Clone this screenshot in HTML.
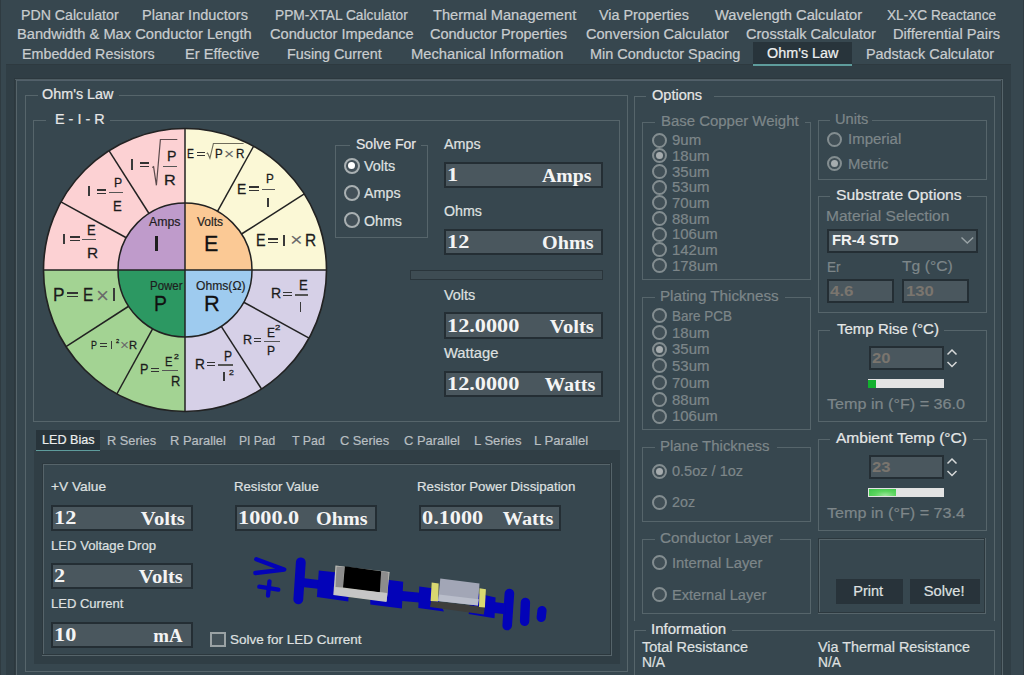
<!DOCTYPE html><html><head><meta charset="utf-8"><style>html,body{margin:0;padding:0;width:1024px;height:675px;overflow:hidden;background:#37474f;}.a{position:absolute;}.t{position:absolute;white-space:nowrap;line-height:normal;}</style></head><body><div class="a" style="left:0px;top:0px;width:1024px;height:675px;background:#37474f;"></div>
<div class="a" style="left:0px;top:0px;width:1px;height:675px;background:#2f3b41;"></div>
<div class="a" style="left:1023px;top:0px;width:1px;height:675px;background:#2f3b41;"></div>
<div class="a" style="left:753px;top:42px;width:99px;height:22px;background:#28343b;"></div>
<div class="t" style="left:20.80px;top:7.63px;font-size:13.77px;color:#c9cdcf;font-family:'Liberation Sans', sans-serif;font-weight:400;transform:scaleX(1.0295);transform-origin:left 0;-webkit-text-stroke:0.2px #c9cdcf;">PDN Calculator</div>
<div class="t" style="left:142.00px;top:7.63px;font-size:13.77px;color:#c9cdcf;font-family:'Liberation Sans', sans-serif;font-weight:400;transform:scaleX(1.0566);transform-origin:left 0;-webkit-text-stroke:0.2px #c9cdcf;">Planar Inductors</div>
<div class="t" style="left:274.90px;top:7.63px;font-size:13.77px;color:#c9cdcf;font-family:'Liberation Sans', sans-serif;font-weight:400;transform:scaleX(0.9973);transform-origin:left 0;-webkit-text-stroke:0.2px #c9cdcf;">PPM-XTAL Calculator</div>
<div class="t" style="left:432.70px;top:7.63px;font-size:13.77px;color:#c9cdcf;font-family:'Liberation Sans', sans-serif;font-weight:400;transform:scaleX(1.0635);transform-origin:left 0;-webkit-text-stroke:0.2px #c9cdcf;">Thermal Management</div>
<div class="t" style="left:598.50px;top:7.63px;font-size:13.77px;color:#c9cdcf;font-family:'Liberation Sans', sans-serif;font-weight:400;transform:scaleX(1.0434);transform-origin:left 0;-webkit-text-stroke:0.2px #c9cdcf;">Via Properties</div>
<div class="t" style="left:715.20px;top:7.63px;font-size:13.77px;color:#c9cdcf;font-family:'Liberation Sans', sans-serif;font-weight:400;transform:scaleX(1.0666);transform-origin:left 0;-webkit-text-stroke:0.2px #c9cdcf;">Wavelength Calculator</div>
<div class="t" style="left:887.00px;top:7.63px;font-size:13.77px;color:#c9cdcf;font-family:'Liberation Sans', sans-serif;font-weight:400;transform:scaleX(0.9899);transform-origin:left 0;-webkit-text-stroke:0.2px #c9cdcf;">XL-XC Reactance</div>
<div class="t" style="left:17.30px;top:27.43px;font-size:13.77px;color:#c9cdcf;font-family:'Liberation Sans', sans-serif;font-weight:400;transform:scaleX(1.0651);transform-origin:left 0;-webkit-text-stroke:0.2px #c9cdcf;">Bandwidth &amp; Max Conductor Length</div>
<div class="t" style="left:269.80px;top:27.43px;font-size:13.77px;color:#c9cdcf;font-family:'Liberation Sans', sans-serif;font-weight:400;transform:scaleX(1.0609);transform-origin:left 0;-webkit-text-stroke:0.2px #c9cdcf;">Conductor Impedance</div>
<div class="t" style="left:430.20px;top:27.43px;font-size:13.77px;color:#c9cdcf;font-family:'Liberation Sans', sans-serif;font-weight:400;transform:scaleX(1.0536);transform-origin:left 0;-webkit-text-stroke:0.2px #c9cdcf;">Conductor Properties</div>
<div class="t" style="left:586.30px;top:27.43px;font-size:13.77px;color:#c9cdcf;font-family:'Liberation Sans', sans-serif;font-weight:400;transform:scaleX(1.0555);transform-origin:left 0;-webkit-text-stroke:0.2px #c9cdcf;">Conversion Calculator</div>
<div class="t" style="left:746.10px;top:27.43px;font-size:13.77px;color:#c9cdcf;font-family:'Liberation Sans', sans-serif;font-weight:400;transform:scaleX(1.0547);transform-origin:left 0;-webkit-text-stroke:0.2px #c9cdcf;">Crosstalk Calculator</div>
<div class="t" style="left:893.00px;top:27.43px;font-size:13.77px;color:#c9cdcf;font-family:'Liberation Sans', sans-serif;font-weight:400;transform:scaleX(1.0639);transform-origin:left 0;-webkit-text-stroke:0.2px #c9cdcf;">Differential Pairs</div>
<div class="t" style="left:22.30px;top:47.23px;font-size:13.77px;color:#c9cdcf;font-family:'Liberation Sans', sans-serif;font-weight:400;transform:scaleX(1.0385);transform-origin:left 0;-webkit-text-stroke:0.2px #c9cdcf;">Embedded Resistors</div>
<div class="t" style="left:185.30px;top:47.23px;font-size:13.77px;color:#c9cdcf;font-family:'Liberation Sans', sans-serif;font-weight:400;transform:scaleX(1.0603);transform-origin:left 0;-webkit-text-stroke:0.2px #c9cdcf;">Er Effective</div>
<div class="t" style="left:286.80px;top:47.23px;font-size:13.77px;color:#c9cdcf;font-family:'Liberation Sans', sans-serif;font-weight:400;transform:scaleX(1.0410);transform-origin:left 0;-webkit-text-stroke:0.2px #c9cdcf;">Fusing Current</div>
<div class="t" style="left:411.20px;top:47.23px;font-size:13.77px;color:#c9cdcf;font-family:'Liberation Sans', sans-serif;font-weight:400;transform:scaleX(1.0711);transform-origin:left 0;-webkit-text-stroke:0.2px #c9cdcf;">Mechanical Information</div>
<div class="t" style="left:590.10px;top:47.23px;font-size:13.77px;color:#c9cdcf;font-family:'Liberation Sans', sans-serif;font-weight:400;transform:scaleX(1.0501);transform-origin:left 0;-webkit-text-stroke:0.2px #c9cdcf;">Min Conductor Spacing</div>
<div class="t" style="left:767.20px;top:45.63px;font-size:13.77px;color:#eef0f0;font-family:'Liberation Sans', sans-serif;font-weight:400;transform:scaleX(1.0437);transform-origin:left 0;-webkit-text-stroke:0.2px #eef0f0;">Ohm's Law</div>
<div class="t" style="left:866.20px;top:47.23px;font-size:13.77px;color:#c9cdcf;font-family:'Liberation Sans', sans-serif;font-weight:400;transform:scaleX(1.0460);transform-origin:left 0;-webkit-text-stroke:0.2px #c9cdcf;">Padstack Calculator</div>
<div class="a" style="left:6px;top:64px;width:1005px;height:611px;background:#303e45;"></div>
<div class="a" style="left:6px;top:64px;width:1005px;height:1px;background:#2e3a40;"></div>
<div class="a" style="left:753px;top:64px;width:99px;height:2px;background:#5e9c9c;"></div>
<div class="a" style="left:14px;top:78px;width:989px;height:597px;background:#37474f;"></div>
<div class="a" style="left:14px;top:78px;width:989px;height:1px;background:#2c383e;"></div>
<div class="a" style="left:14px;top:78px;width:1px;height:597px;background:#2c383e;"></div>
<div class="a" style="left:15px;top:79px;width:1px;height:596px;background:#303c42;"></div>
<div class="a" style="left:15px;top:79px;width:988px;height:1px;background:#4e5c62;"></div>
<div class="a" style="left:16px;top:80px;width:987px;height:1px;background:#52606a;"></div>
<div class="a" style="left:16px;top:80px;width:1px;height:595px;background:#56646a;"></div>
<div class="a" style="left:1001px;top:80px;width:1px;height:595px;background:#303c42;"></div>
<div class="a" style="left:1002px;top:79px;width:1px;height:596px;background:#56646a;"></div>
<div class="a" style="left:25px;top:95px;width:603px;height:1px;background:#56656b;"></div>
<div class="a" style="left:25px;top:95px;width:1px;height:577px;background:#56656b;"></div>
<div class="a" style="left:627px;top:95px;width:1px;height:577px;background:#56656b;"></div>
<div class="a" style="left:25px;top:671px;width:603px;height:1px;background:#56656b;"></div>
<div class="a" style="left:38px;top:94px;width:81px;height:3px;background:#37474f;"></div>
<div class="t" style="left:42.00px;top:86.53px;font-size:13.77px;color:#e6e6e6;font-family:'Liberation Sans', sans-serif;font-weight:400;transform:scaleX(1.0437);transform-origin:left 0;-webkit-text-stroke:0.2px #e6e6e6;">Ohm's Law</div>
<div class="a" style="left:33px;top:120px;width:587px;height:1px;background:#56656b;"></div>
<div class="a" style="left:33px;top:120px;width:1px;height:302px;background:#56656b;"></div>
<div class="a" style="left:619px;top:120px;width:1px;height:302px;background:#56656b;"></div>
<div class="a" style="left:33px;top:421px;width:587px;height:1px;background:#56656b;"></div>
<div class="a" style="left:46px;top:119px;width:64px;height:3px;background:#37474f;"></div>
<div class="t" style="left:54.60px;top:111.53px;font-size:13.77px;color:#e6e6e6;font-family:'Liberation Sans', sans-serif;font-weight:400;transform:scaleX(1.0454);transform-origin:left 0;-webkit-text-stroke:0.2px #e6e6e6;">E - I - R</div>
<svg class="a" style="left:0;top:0" width="1024" height="675"><path d="M185,270 L326.50,270.00 A141.5,141.5 0 0 0 185.00,128.50 Z" fill="#fbf8d6"/><path d="M185,270 L185.00,128.50 A141.5,141.5 0 0 0 43.50,270.00 Z" fill="#fcd1d3"/><path d="M185,270 L43.50,270.00 A141.5,141.5 0 0 0 185.00,411.50 Z" fill="#a3d393"/><path d="M185,270 L185.00,411.50 A141.5,141.5 0 0 0 326.50,270.00 Z" fill="#d6d0e7"/><line x1="241.51" y1="234.00" x2="304.34" y2="193.97" stroke="#222" stroke-width="1.5"/><line x1="217.48" y1="211.40" x2="253.60" y2="146.24" stroke="#222" stroke-width="1.5"/><line x1="149.00" y1="213.49" x2="108.97" y2="150.66" stroke="#222" stroke-width="1.5"/><line x1="126.26" y1="237.77" x2="60.94" y2="201.94" stroke="#222" stroke-width="1.5"/><line x1="128.65" y1="306.25" x2="65.99" y2="346.55" stroke="#222" stroke-width="1.5"/><line x1="152.72" y1="328.71" x2="116.83" y2="394.00" stroke="#222" stroke-width="1.5"/><line x1="221.25" y1="326.35" x2="261.55" y2="389.01" stroke="#222" stroke-width="1.5"/><line x1="243.74" y1="302.23" x2="309.06" y2="338.06" stroke="#222" stroke-width="1.5"/><path d="M185,270 L252.00,270.00 A67,67 0 0 0 185.00,203.00 Z" fill="#fbc995"/><path d="M185,270 L185.00,203.00 A67,67 0 0 0 118.00,270.00 Z" fill="#bf9bcb"/><path d="M185,270 L118.00,270.00 A67,67 0 0 0 185.00,337.00 Z" fill="#2c9862"/><path d="M185,270 L185.00,337.00 A67,67 0 0 0 252.00,270.00 Z" fill="#9ecbef"/><circle cx="185" cy="270" r="67" fill="none" stroke="#222" stroke-width="1.5"/><circle cx="185" cy="270" r="141.5" fill="none" stroke="#222" stroke-width="1.6"/><line x1="43.5" y1="270" x2="326.5" y2="270" stroke="#222" stroke-width="1.5"/><line x1="185" y1="128.5" x2="185" y2="411.5" stroke="#222" stroke-width="1.5"/><polyline points="152.2,167.6 153.6,166.8 156.4,185.3 160.4,139.5 177.3,139.5" fill="none" stroke="#5a4a4c" stroke-width="1.2"/><polyline points="206.6,153.6 207.6,153 209.9,158.3 213.4,143.5 243.6,143.5" fill="none" stroke="#6f6c5c" stroke-width="1.1"/></svg>
<div class="a" style="left:131.05px;top:159.25px;width:1.5px;height:11.199999999999989px;background:#3a3a3a;"></div>
<div class="a" style="left:139.5px;top:162px;width:9.900000000000006px;height:1.5999999999999943px;background:#333333;"></div>
<div class="a" style="left:139.5px;top:165.79999999999998px;width:9.900000000000006px;height:1.5999999999999943px;background:#333333;"></div>
<div class="t" style="left:167.14px;top:146.80px;font-size:15.22px;color:#1c1c1c;font-family:'Liberation Sans', sans-serif;font-weight:400;transform:scaleX(0.9286);transform-origin:left 0;-webkit-text-stroke:0.28px #1c1c1c;">P</div>
<div class="a" style="left:163.1px;top:165.5px;width:13.700000000000017px;height:1.4000000000000057px;background:#555;"></div>
<div class="t" style="left:164.27px;top:172.13px;font-size:14.20px;color:#1c1c1c;font-family:'Liberation Sans', sans-serif;font-weight:400;transform:scaleX(1.1431);transform-origin:left 0;-webkit-text-stroke:0.28px #1c1c1c;">R</div>
<div class="a" style="left:88.05px;top:185.75px;width:1.5px;height:10.5px;background:#3a3a3a;"></div>
<div class="a" style="left:96.7px;top:189px;width:9.200000000000003px;height:1.5999999999999943px;background:#333333;"></div>
<div class="a" style="left:96.7px;top:192.79999999999998px;width:9.200000000000003px;height:1.5999999999999943px;background:#333333;"></div>
<div class="a" style="left:109px;top:191.7px;width:13.700000000000003px;height:1.4000000000000057px;background:#555;"></div>
<div class="t" style="left:113.59px;top:174.85px;font-size:13.19px;color:#1c1c1c;font-family:'Liberation Sans', sans-serif;font-weight:400;transform:scaleX(0.9297);transform-origin:left 0;-webkit-text-stroke:0.28px #1c1c1c;">P</div>
<div class="t" style="left:112.92px;top:197.13px;font-size:15.07px;color:#1c1c1c;font-family:'Liberation Sans', sans-serif;font-weight:400;transform:scaleX(0.8716);transform-origin:left 0;-webkit-text-stroke:0.28px #1c1c1c;">E</div>
<div class="a" style="left:63.05px;top:233.75px;width:1.5px;height:10.5px;background:#3a3a3a;"></div>
<div class="a" style="left:70.4px;top:236px;width:9.199999999999989px;height:1.5999999999999943px;background:#333333;"></div>
<div class="a" style="left:70.4px;top:239.79999999999998px;width:9.199999999999989px;height:1.5999999999999943px;background:#333333;"></div>
<div class="a" style="left:82.3px;top:239.0px;width:13.400000000000006px;height:1.4000000000000057px;background:#555;"></div>
<div class="t" style="left:86.63px;top:221.13px;font-size:15.07px;color:#1c1c1c;font-family:'Liberation Sans', sans-serif;font-weight:400;transform:scaleX(0.8595);transform-origin:left 0;-webkit-text-stroke:0.28px #1c1c1c;">E</div>
<div class="t" style="left:86.74px;top:243.83px;font-size:15.07px;color:#1c1c1c;font-family:'Liberation Sans', sans-serif;font-weight:400;transform:scaleX(1.0214);transform-origin:left 0;-webkit-text-stroke:0.28px #1c1c1c;">R</div>
<div class="t" style="left:187.44px;top:146.71px;font-size:12.46px;color:#1c1c1c;font-family:'Liberation Sans', sans-serif;font-weight:400;transform:scaleX(0.8332);transform-origin:left 0;-webkit-text-stroke:0.28px #1c1c1c;">E</div>
<div class="a" style="left:197.0px;top:152px;width:7.5px;height:1.3000000000000114px;background:#333333;"></div>
<div class="a" style="left:197.0px;top:154.9px;width:7.5px;height:1.299999999999983px;background:#333333;"></div>
<div class="t" style="left:215.35px;top:146.71px;font-size:12.46px;color:#1c1c1c;font-family:'Liberation Sans', sans-serif;font-weight:400;transform:scaleX(0.9238);transform-origin:left 0;-webkit-text-stroke:0.28px #1c1c1c;">P</div>
<div class="t" style="left:224.35px;top:145.45px;font-size:15.51px;color:#6a6a6a;font-family:'Liberation Sans', sans-serif;font-weight:400;transform:scaleX(1.1246);transform-origin:left 0;-webkit-text-stroke:0px #6a6a6a;">×</div>
<div class="t" style="left:235.83px;top:146.71px;font-size:12.46px;color:#1c1c1c;font-family:'Liberation Sans', sans-serif;font-weight:400;transform:scaleX(0.9385);transform-origin:left 0;-webkit-text-stroke:0.28px #1c1c1c;">R</div>
<div class="t" style="left:237.46px;top:180.17px;font-size:14.93px;color:#1c1c1c;font-family:'Liberation Sans', sans-serif;font-weight:400;transform:scaleX(0.9293);transform-origin:left 0;-webkit-text-stroke:0.28px #1c1c1c;">E</div>
<div class="a" style="left:249.4px;top:186px;width:9.200000000000017px;height:1.5999999999999943px;background:#333333;"></div>
<div class="a" style="left:249.4px;top:189.79999999999998px;width:9.200000000000017px;height:1.5999999999999943px;background:#333333;"></div>
<div class="a" style="left:261.8px;top:189.0px;width:13.0px;height:1.4000000000000057px;background:#555;"></div>
<div class="t" style="left:266.13px;top:172.41px;font-size:12.46px;color:#1c1c1c;font-family:'Liberation Sans', sans-serif;font-weight:400;transform:scaleX(0.9388);transform-origin:left 0;-webkit-text-stroke:0.28px #1c1c1c;">P</div>
<div class="a" style="left:267.15px;top:198.25px;width:1.5px;height:8.800000000000011px;background:#3a3a3a;"></div>
<div class="t" style="left:255.52px;top:230.98px;font-size:16.23px;color:#1c1c1c;font-family:'Liberation Sans', sans-serif;font-weight:400;transform:scaleX(0.8885);transform-origin:left 0;-webkit-text-stroke:0.28px #1c1c1c;">E</div>
<div class="a" style="left:268.4px;top:238px;width:9.700000000000045px;height:1.5999999999999943px;background:#333333;"></div>
<div class="a" style="left:268.4px;top:241.79999999999998px;width:9.700000000000045px;height:1.5999999999999943px;background:#333333;"></div>
<div class="a" style="left:283.4px;top:234.55px;width:1.5px;height:11.199999999999989px;background:#3a3a3a;"></div>
<div class="t" style="left:290.15px;top:230.49px;font-size:18.20px;color:#6a6a6a;font-family:'Liberation Sans', sans-serif;font-weight:400;transform:scaleX(1.1926);transform-origin:left 0;-webkit-text-stroke:0px #6a6a6a;">×</div>
<div class="t" style="left:305.28px;top:230.98px;font-size:16.23px;color:#1c1c1c;font-family:'Liberation Sans', sans-serif;font-weight:400;transform:scaleX(0.9536);transform-origin:left 0;-webkit-text-stroke:0.28px #1c1c1c;">R</div>
<div class="t" style="left:53.09px;top:284.56px;font-size:17.68px;color:#1c1c1c;font-family:'Liberation Sans', sans-serif;font-weight:400;transform:scaleX(0.9789);transform-origin:left 0;-webkit-text-stroke:0.28px #1c1c1c;">P</div>
<div class="a" style="left:67.3px;top:292px;width:11.100000000000009px;height:1.6000000000000227px;background:#333333;"></div>
<div class="a" style="left:67.3px;top:295.8px;width:11.100000000000009px;height:1.599999999999966px;background:#333333;"></div>
<div class="t" style="left:82.54px;top:284.56px;font-size:17.68px;color:#1c1c1c;font-family:'Liberation Sans', sans-serif;font-weight:400;transform:scaleX(0.8676);transform-origin:left 0;-webkit-text-stroke:0.28px #1c1c1c;">E</div>
<div class="t" style="left:95.80px;top:282.79px;font-size:21.57px;color:#6a6a6a;font-family:'Liberation Sans', sans-serif;font-weight:400;transform:scaleX(1.0375);transform-origin:left 0;-webkit-text-stroke:0px #6a6a6a;">×</div>
<div class="a" style="left:113.4px;top:288.45px;width:1.5px;height:12.199999999999989px;background:#3a3a3a;"></div>
<div class="t" style="left:91.36px;top:339.09px;font-size:10.72px;color:#1c1c1c;font-family:'Liberation Sans', sans-serif;font-weight:400;transform:scaleX(0.8296);transform-origin:left 0;-webkit-text-stroke:0.28px #1c1c1c;">P</div>
<div class="a" style="left:99.9px;top:343px;width:6.8999999999999915px;height:1.3000000000000114px;background:#333333;"></div>
<div class="a" style="left:99.9px;top:345.90000000000003px;width:6.8999999999999915px;height:1.3000000000000114px;background:#333333;"></div>
<div class="a" style="left:110.9px;top:341.45px;width:1.5px;height:7.400000000000034px;background:#3a3a3a;"></div>
<div class="t" style="left:115.93px;top:338.14px;font-size:6.00px;color:#1c1c1c;font-family:'Liberation Sans', sans-serif;font-weight:400;transform:scaleX(0.9744);transform-origin:left 0;-webkit-text-stroke:0.28px #1c1c1c;">2</div>
<div class="t" style="left:119.79px;top:336.84px;font-size:14.38px;color:#6a6a6a;font-family:'Liberation Sans', sans-serif;font-weight:400;transform:scaleX(1.0719);transform-origin:left 0;-webkit-text-stroke:0px #6a6a6a;">×</div>
<div class="t" style="left:129.37px;top:339.09px;font-size:10.72px;color:#1c1c1c;font-family:'Liberation Sans', sans-serif;font-weight:400;transform:scaleX(1.0437);transform-origin:left 0;-webkit-text-stroke:0.28px #1c1c1c;">R</div>
<div class="t" style="left:139.56px;top:361.19px;font-size:13.91px;color:#1c1c1c;font-family:'Liberation Sans', sans-serif;font-weight:400;transform:scaleX(0.9082);transform-origin:left 0;-webkit-text-stroke:0.28px #1c1c1c;">P</div>
<div class="a" style="left:150.9px;top:368px;width:8.0px;height:1.3000000000000114px;background:#333333;"></div>
<div class="a" style="left:150.9px;top:370.90000000000003px;width:8.0px;height:1.3000000000000114px;background:#333333;"></div>
<div class="a" style="left:161.7px;top:369.5px;width:16.400000000000006px;height:1.3999999999999773px;background:#555;"></div>
<div class="t" style="left:165.18px;top:353.58px;font-size:13.48px;color:#1c1c1c;font-family:'Liberation Sans', sans-serif;font-weight:400;transform:scaleX(0.8250);transform-origin:left 0;-webkit-text-stroke:0.28px #1c1c1c;">E</div>
<div class="t" style="left:174.18px;top:352.62px;font-size:6.57px;color:#1c1c1c;font-family:'Liberation Sans', sans-serif;font-weight:400;transform:scaleX(1.3244);transform-origin:left 0;-webkit-text-stroke:0.28px #1c1c1c;">2</div>
<div class="t" style="left:170.84px;top:373.36px;font-size:14.06px;color:#1c1c1c;font-family:'Liberation Sans', sans-serif;font-weight:400;transform:scaleX(0.9158);transform-origin:left 0;-webkit-text-stroke:0.28px #1c1c1c;">R</div>
<div class="t" style="left:194.87px;top:355.89px;font-size:13.91px;color:#1c1c1c;font-family:'Liberation Sans', sans-serif;font-weight:400;transform:scaleX(0.9857);transform-origin:left 0;-webkit-text-stroke:0.28px #1c1c1c;">R</div>
<div class="a" style="left:206.6px;top:362px;width:8.599999999999994px;height:1.3000000000000114px;background:#333333;"></div>
<div class="a" style="left:206.6px;top:364.90000000000003px;width:8.599999999999994px;height:1.3000000000000114px;background:#333333;"></div>
<div class="a" style="left:218.2px;top:364.3px;width:14.700000000000017px;height:1.3999999999999773px;background:#555;"></div>
<div class="t" style="left:223.70px;top:347.69px;font-size:13.91px;color:#1c1c1c;font-family:'Liberation Sans', sans-serif;font-weight:400;transform:scaleX(0.8679);transform-origin:left 0;-webkit-text-stroke:0.28px #1c1c1c;">P</div>
<div class="a" style="left:223.05px;top:371.85px;width:1.5px;height:9.599999999999966px;background:#3a3a3a;"></div>
<div class="t" style="left:228.68px;top:367.55px;font-size:7.86px;color:#1c1c1c;font-family:'Liberation Sans', sans-serif;font-weight:400;transform:scaleX(1.1077);transform-origin:left 0;-webkit-text-stroke:0.28px #1c1c1c;">2</div>
<div class="t" style="left:271.25px;top:286.12px;font-size:13.77px;color:#1c1c1c;font-family:'Liberation Sans', sans-serif;font-weight:400;transform:scaleX(1.0205);transform-origin:left 0;-webkit-text-stroke:0.28px #1c1c1c;">R</div>
<div class="a" style="left:283.1px;top:292px;width:8.799999999999955px;height:1.3000000000000114px;background:#333333;"></div>
<div class="a" style="left:283.1px;top:294.90000000000003px;width:8.799999999999955px;height:1.3000000000000114px;background:#333333;"></div>
<div class="a" style="left:294.7px;top:294.2px;width:13.0px;height:1.400000000000034px;background:#555;"></div>
<div class="t" style="left:298.52px;top:275.83px;font-size:15.07px;color:#1c1c1c;font-family:'Liberation Sans', sans-serif;font-weight:400;transform:scaleX(0.8716);transform-origin:left 0;-webkit-text-stroke:0.28px #1c1c1c;">E</div>
<div class="a" style="left:299.65px;top:301.75px;width:1.5px;height:10.5px;background:#3a3a3a;"></div>
<div class="t" style="left:243.37px;top:333.04px;font-size:12.32px;color:#1c1c1c;font-family:'Liberation Sans', sans-serif;font-weight:400;transform:scaleX(1.0178);transform-origin:left 0;-webkit-text-stroke:0.28px #1c1c1c;">R</div>
<div class="a" style="left:254.1px;top:338px;width:7.200000000000017px;height:1.3000000000000114px;background:#333333;"></div>
<div class="a" style="left:254.1px;top:340.90000000000003px;width:7.200000000000017px;height:1.3000000000000114px;background:#333333;"></div>
<div class="a" style="left:264.1px;top:340.6px;width:15.599999999999966px;height:1.3999999999999773px;background:#555;"></div>
<div class="t" style="left:267.02px;top:324.85px;font-size:13.19px;color:#1c1c1c;font-family:'Liberation Sans', sans-serif;font-weight:400;transform:scaleX(0.8988);transform-origin:left 0;-webkit-text-stroke:0.28px #1c1c1c;">E</div>
<div class="t" style="left:275.34px;top:324.00px;font-size:7.14px;color:#1c1c1c;font-family:'Liberation Sans', sans-serif;font-weight:400;transform:scaleX(1.3415);transform-origin:left 0;-webkit-text-stroke:0.28px #1c1c1c;">2</div>
<div class="t" style="left:267.00px;top:344.47px;font-size:12.17px;color:#1c1c1c;font-family:'Liberation Sans', sans-serif;font-weight:400;transform:scaleX(0.9919);transform-origin:left 0;-webkit-text-stroke:0.28px #1c1c1c;">P</div>
<div class="t" style="left:149.10px;top:214.87px;font-size:12.08px;color:#1e1e1e;font-family:'Liberation Sans', sans-serif;font-weight:400;transform:scaleX(1.0201);transform-origin:left 0;-webkit-text-stroke:0.2px #1e1e1e;">Amps</div>
<div class="a" style="left:155.4px;top:236.25px;width:2.1999999999999886px;height:15.099999999999994px;background:#1e1e1e;"></div>
<div class="t" style="left:196.70px;top:214.87px;font-size:12.08px;color:#1e1e1e;font-family:'Liberation Sans', sans-serif;font-weight:400;transform:scaleX(0.9928);transform-origin:left 0;-webkit-text-stroke:0.2px #1e1e1e;">Volts</div>
<div class="t" style="left:204.46px;top:231.44px;font-size:21.88px;color:#111;font-family:'Liberation Sans', sans-serif;font-weight:400;transform:scaleX(0.9776);transform-origin:left 0;-webkit-text-stroke:0.28px #111;">E</div>
<div class="t" style="left:149.70px;top:278.87px;font-size:12.08px;color:#1e1e1e;font-family:'Liberation Sans', sans-serif;font-weight:400;transform:scaleX(0.9492);transform-origin:left 0;-webkit-text-stroke:0.2px #1e1e1e;">Power</div>
<div class="t" style="left:153.62px;top:291.14px;font-size:22.32px;color:#111;font-family:'Liberation Sans', sans-serif;font-weight:400;transform:scaleX(0.8676);transform-origin:left 0;-webkit-text-stroke:0.28px #111;">P</div>
<div class="t" style="left:196.30px;top:278.87px;font-size:12.08px;color:#1e1e1e;font-family:'Liberation Sans', sans-serif;font-weight:400;transform:scaleX(1.0042);transform-origin:left 0;-webkit-text-stroke:0.2px #1e1e1e;">Ohms(Ω)</div>
<div class="t" style="left:204.43px;top:291.14px;font-size:22.32px;color:#111;font-family:'Liberation Sans', sans-serif;font-weight:400;transform:scaleX(0.9759);transform-origin:left 0;-webkit-text-stroke:0.28px #111;">R</div>
<div class="a" style="left:335px;top:145px;width:93px;height:1px;background:#56656b;"></div>
<div class="a" style="left:335px;top:145px;width:1px;height:93px;background:#56656b;"></div>
<div class="a" style="left:427px;top:145px;width:1px;height:93px;background:#56656b;"></div>
<div class="a" style="left:335px;top:237px;width:93px;height:1px;background:#56656b;"></div>
<div class="a" style="left:350px;top:144px;width:71px;height:3px;background:#37474f;"></div>
<div class="t" style="left:355.70px;top:136.53px;font-size:13.77px;color:#e6e6e6;font-family:'Liberation Sans', sans-serif;font-weight:400;transform:scaleX(1.0171);transform-origin:left 0;-webkit-text-stroke:0.2px #e6e6e6;">Solve For</div>
<div class="a" style="left:343.5px;top:157.5px;width:16px;height:16px;box-sizing:border-box;border:2px solid #a9b0b2;border-radius:50%;background:#435058;"></div>
<div class="a" style="left:348.0px;top:162.0px;width:7px;height:7px;border-radius:50%;background:#ffffff;"></div>
<div class="a" style="left:343.5px;top:184.7px;width:16px;height:16px;box-sizing:border-box;border:2px solid #a9b0b2;border-radius:50%;background:#435058;"></div>
<div class="a" style="left:343.5px;top:212.0px;width:16px;height:16px;box-sizing:border-box;border:2px solid #a9b0b2;border-radius:50%;background:#435058;"></div>
<div class="t" style="left:364.00px;top:158.53px;font-size:13.77px;color:#dfe0e0;font-family:'Liberation Sans', sans-serif;font-weight:400;transform:scaleX(1.0487);transform-origin:left 0;-webkit-text-stroke:0.2px #dfe0e0;">Volts</div>
<div class="t" style="left:364.00px;top:186.03px;font-size:13.77px;color:#dfe0e0;font-family:'Liberation Sans', sans-serif;font-weight:400;transform:scaleX(1.0389);transform-origin:left 0;-webkit-text-stroke:0.2px #dfe0e0;">Amps</div>
<div class="t" style="left:364.00px;top:213.53px;font-size:13.77px;color:#dfe0e0;font-family:'Liberation Sans', sans-serif;font-weight:400;transform:scaleX(1.0319);transform-origin:left 0;-webkit-text-stroke:0.2px #dfe0e0;">Ohms</div>
<div class="t" style="left:443.60px;top:136.53px;font-size:13.77px;color:#dfe0e0;font-family:'Liberation Sans', sans-serif;font-weight:400;transform:scaleX(1.0389);transform-origin:left 0;-webkit-text-stroke:0.2px #dfe0e0;">Amps</div>
<div class="a" style="left:444px;top:162px;width:159px;height:26px;background:#242e34;"></div>
<div class="a" style="left:446px;top:164px;width:155px;height:22px;background:#4a575e;"></div>
<div class="t" style="left:447.00px;top:165.13px;font-size:17.81px;color:#f4f4f4;font-family:'Liberation Serif', serif;font-weight:700;transform:scaleX(1.2503);transform-origin:left 0;">1</div>
<div class="t" style="left:547.47px;top:166.13px;font-size:17.81px;color:#f4f4f4;font-family:'Liberation Serif', serif;font-weight:700;transform:scaleX(1.1125);transform-origin:right 0;">Amps</div>
<div class="t" style="left:443.60px;top:203.53px;font-size:13.77px;color:#dfe0e0;font-family:'Liberation Sans', sans-serif;font-weight:400;transform:scaleX(1.0319);transform-origin:left 0;-webkit-text-stroke:0.2px #dfe0e0;">Ohms</div>
<div class="a" style="left:444px;top:229px;width:159px;height:26px;background:#242e34;"></div>
<div class="a" style="left:446px;top:231px;width:155px;height:22px;background:#4a575e;"></div>
<div class="t" style="left:447.00px;top:232.13px;font-size:17.81px;color:#f4f4f4;font-family:'Liberation Serif', serif;font-weight:700;transform:scaleX(1.2503);transform-origin:left 0;">12</div>
<div class="t" style="left:548.48px;top:233.13px;font-size:17.81px;color:#f4f4f4;font-family:'Liberation Serif', serif;font-weight:700;transform:scaleX(1.1316);transform-origin:right 0;">Ohms</div>
<div class="a" style="left:410px;top:270px;width:193px;height:10px;background:#2a353b;"></div>
<div class="a" style="left:411px;top:271px;width:191px;height:8px;background:#3e4c53;"></div>
<div class="t" style="left:443.60px;top:287.53px;font-size:13.77px;color:#dfe0e0;font-family:'Liberation Sans', sans-serif;font-weight:400;transform:scaleX(1.0487);transform-origin:left 0;-webkit-text-stroke:0.2px #dfe0e0;">Volts</div>
<div class="a" style="left:444px;top:312px;width:159px;height:27px;background:#242e34;"></div>
<div class="a" style="left:446px;top:314px;width:155px;height:23px;background:#4a575e;"></div>
<div class="t" style="left:447.00px;top:315.63px;font-size:17.81px;color:#f4f4f4;font-family:'Liberation Serif', serif;font-weight:700;transform:scaleX(1.2504);transform-origin:left 0;">12.0000</div>
<div class="t" style="left:555.56px;top:316.63px;font-size:17.81px;color:#f4f4f4;font-family:'Liberation Serif', serif;font-weight:700;transform:scaleX(1.1623);transform-origin:right 0;">Volts</div>
<div class="t" style="left:443.60px;top:346.03px;font-size:13.77px;color:#dfe0e0;font-family:'Liberation Sans', sans-serif;font-weight:400;transform:scaleX(1.0711);transform-origin:left 0;-webkit-text-stroke:0.2px #dfe0e0;">Wattage</div>
<div class="a" style="left:444px;top:371px;width:159px;height:26px;background:#242e34;"></div>
<div class="a" style="left:446px;top:373px;width:155px;height:22px;background:#4a575e;"></div>
<div class="t" style="left:447.00px;top:374.13px;font-size:17.81px;color:#f4f4f4;font-family:'Liberation Serif', serif;font-weight:700;transform:scaleX(1.2504);transform-origin:left 0;">12.0000</div>
<div class="t" style="left:551.48px;top:375.13px;font-size:17.81px;color:#f4f4f4;font-family:'Liberation Serif', serif;font-weight:700;transform:scaleX(1.1396);transform-origin:right 0;">Watts</div>
<div class="a" style="left:36px;top:429.5px;width:64px;height:20.5px;background:#28343b;"></div>
<div class="a" style="left:34px;top:450px;width:585.5px;height:214px;background:#303e45;"></div>
<div class="a" style="left:36px;top:449.5px;width:64px;height:1.5px;background:#5e9c9c;"></div>
<div class="t" style="left:42.20px;top:432.29px;font-size:12.72px;color:#eceeee;font-family:'Liberation Sans', sans-serif;font-weight:400;transform:scaleX(0.9904);transform-origin:left 0;-webkit-text-stroke:0.2px #eceeee;">LED Bias</div>
<div class="t" style="left:107.20px;top:433.39px;font-size:12.72px;color:#b9bfc2;font-family:'Liberation Sans', sans-serif;font-weight:400;transform:scaleX(1.0061);transform-origin:left 0;-webkit-text-stroke:0.2px #b9bfc2;">R Series</div>
<div class="t" style="left:169.90px;top:433.39px;font-size:12.72px;color:#b9bfc2;font-family:'Liberation Sans', sans-serif;font-weight:400;transform:scaleX(1.0137);transform-origin:left 0;-webkit-text-stroke:0.2px #b9bfc2;">R Parallel</div>
<div class="t" style="left:238.60px;top:433.39px;font-size:12.72px;color:#b9bfc2;font-family:'Liberation Sans', sans-serif;font-weight:400;transform:scaleX(0.9499);transform-origin:left 0;-webkit-text-stroke:0.2px #b9bfc2;">PI Pad</div>
<div class="t" style="left:291.90px;top:433.39px;font-size:12.72px;color:#b9bfc2;font-family:'Liberation Sans', sans-serif;font-weight:400;transform:scaleX(0.9738);transform-origin:left 0;-webkit-text-stroke:0.2px #b9bfc2;">T Pad</div>
<div class="t" style="left:340.30px;top:433.39px;font-size:12.72px;color:#b9bfc2;font-family:'Liberation Sans', sans-serif;font-weight:400;transform:scaleX(1.0070);transform-origin:left 0;-webkit-text-stroke:0.2px #b9bfc2;">C Series</div>
<div class="t" style="left:403.75px;top:433.39px;font-size:12.72px;color:#b9bfc2;font-family:'Liberation Sans', sans-serif;font-weight:400;transform:scaleX(1.0144);transform-origin:left 0;-webkit-text-stroke:0.2px #b9bfc2;">C Parallel</div>
<div class="t" style="left:474.00px;top:433.39px;font-size:12.72px;color:#b9bfc2;font-family:'Liberation Sans', sans-serif;font-weight:400;transform:scaleX(1.0266);transform-origin:left 0;-webkit-text-stroke:0.2px #b9bfc2;">L Series</div>
<div class="t" style="left:534.40px;top:433.39px;font-size:12.72px;color:#b9bfc2;font-family:'Liberation Sans', sans-serif;font-weight:400;transform:scaleX(1.0320);transform-origin:left 0;-webkit-text-stroke:0.2px #b9bfc2;">L Parallel</div>
<div class="a" style="left:42px;top:463px;width:570px;height:193px;background:#37474f;"></div>
<div class="a" style="left:42px;top:463px;width:570px;height:1px;background:#2c383e;"></div>
<div class="a" style="left:42px;top:463px;width:1px;height:193px;background:#2c383e;"></div>
<div class="a" style="left:43px;top:464px;width:568px;height:1px;background:#56646a;"></div>
<div class="a" style="left:43px;top:464px;width:1px;height:190px;background:#56646a;"></div>
<div class="a" style="left:610px;top:464px;width:1px;height:190px;background:#2c383e;"></div>
<div class="a" style="left:43px;top:654px;width:568px;height:1px;background:#2c383e;"></div>
<div class="a" style="left:611px;top:463px;width:1px;height:193px;background:#56646a;"></div>
<div class="a" style="left:42px;top:655px;width:570px;height:1px;background:#56646a;"></div>
<div class="t" style="left:51.20px;top:479.49px;font-size:12.72px;color:#dfe0e0;font-family:'Liberation Sans', sans-serif;font-weight:400;transform:scaleX(1.0787);transform-origin:left 0;-webkit-text-stroke:0.2px #dfe0e0;">+V Value</div>
<div class="t" style="left:234.40px;top:479.49px;font-size:12.72px;color:#dfe0e0;font-family:'Liberation Sans', sans-serif;font-weight:400;transform:scaleX(1.0370);transform-origin:left 0;-webkit-text-stroke:0.2px #dfe0e0;">Resistor Value</div>
<div class="t" style="left:417.00px;top:479.49px;font-size:12.72px;color:#dfe0e0;font-family:'Liberation Sans', sans-serif;font-weight:400;transform:scaleX(1.0418);transform-origin:left 0;-webkit-text-stroke:0.2px #dfe0e0;">Resistor Power Dissipation</div>
<div class="a" style="left:51px;top:505px;width:142px;height:26px;background:#242e34;"></div>
<div class="a" style="left:53px;top:507px;width:138px;height:22px;background:#4a575e;"></div>
<div class="t" style="left:54.00px;top:508.13px;font-size:17.81px;color:#f4f4f4;font-family:'Liberation Serif', serif;font-weight:700;transform:scaleX(1.2503);transform-origin:left 0;">12</div>
<div class="t" style="left:147.06px;top:509.13px;font-size:17.81px;color:#f4f4f4;font-family:'Liberation Serif', serif;font-weight:700;transform:scaleX(1.1623);transform-origin:right 0;">Volts</div>
<div class="a" style="left:234.5px;top:505px;width:142.5px;height:26px;background:#242e34;"></div>
<div class="a" style="left:236.5px;top:507px;width:138.5px;height:22px;background:#4a575e;"></div>
<div class="t" style="left:237.50px;top:508.13px;font-size:17.81px;color:#f4f4f4;font-family:'Liberation Serif', serif;font-weight:700;transform:scaleX(1.2504);transform-origin:left 0;">1000.0</div>
<div class="t" style="left:322.48px;top:509.13px;font-size:17.81px;color:#f4f4f4;font-family:'Liberation Serif', serif;font-weight:700;transform:scaleX(1.1316);transform-origin:right 0;">Ohms</div>
<div class="a" style="left:419px;top:505px;width:142px;height:26px;background:#242e34;"></div>
<div class="a" style="left:421px;top:507px;width:138px;height:22px;background:#4a575e;"></div>
<div class="t" style="left:422.00px;top:508.13px;font-size:17.81px;color:#f4f4f4;font-family:'Liberation Serif', serif;font-weight:700;transform:scaleX(1.2504);transform-origin:left 0;">0.1000</div>
<div class="t" style="left:509.48px;top:509.13px;font-size:17.81px;color:#f4f4f4;font-family:'Liberation Serif', serif;font-weight:700;transform:scaleX(1.1396);transform-origin:right 0;">Watts</div>
<div class="t" style="left:51.00px;top:537.99px;font-size:12.72px;color:#dfe0e0;font-family:'Liberation Sans', sans-serif;font-weight:400;transform:scaleX(1.0317);transform-origin:left 0;-webkit-text-stroke:0.2px #dfe0e0;">LED Voltage Drop</div>
<div class="a" style="left:51px;top:563px;width:142px;height:26px;background:#242e34;"></div>
<div class="a" style="left:53px;top:565px;width:138px;height:22px;background:#4a575e;"></div>
<div class="t" style="left:54.00px;top:566.13px;font-size:17.81px;color:#f4f4f4;font-family:'Liberation Serif', serif;font-weight:700;transform:scaleX(1.2503);transform-origin:left 0;">2</div>
<div class="t" style="left:145.06px;top:567.13px;font-size:17.81px;color:#f4f4f4;font-family:'Liberation Serif', serif;font-weight:700;transform:scaleX(1.1623);transform-origin:right 0;">Volts</div>
<div class="t" style="left:51.00px;top:595.99px;font-size:12.72px;color:#dfe0e0;font-family:'Liberation Sans', sans-serif;font-weight:400;transform:scaleX(1.0244);transform-origin:left 0;-webkit-text-stroke:0.2px #dfe0e0;">LED Current</div>
<div class="a" style="left:51px;top:621.5px;width:142px;height:26.5px;background:#242e34;"></div>
<div class="a" style="left:53px;top:623.5px;width:138px;height:22.5px;background:#4a575e;"></div>
<div class="t" style="left:54.00px;top:624.88px;font-size:17.81px;color:#f4f4f4;font-family:'Liberation Serif', serif;font-weight:700;transform:scaleX(1.2503);transform-origin:left 0;">10</div>
<div class="t" style="left:154.80px;top:625.88px;font-size:17.81px;color:#f4f4f4;font-family:'Liberation Serif', serif;font-weight:700;transform:scaleX(1.0595);transform-origin:right 0;">mA</div>
<div class="a" style="left:210px;top:632px;width:15.5px;height:14.5px;background:#445259;box-sizing:border-box;border:2px solid #9aa2a4;"></div>
<div class="t" style="left:230.20px;top:632.29px;font-size:12.72px;color:#dfe0e0;font-family:'Liberation Sans', sans-serif;font-weight:400;transform:scaleX(1.0572);transform-origin:left 0;-webkit-text-stroke:0.2px #dfe0e0;">Solve for LED Current</div>
<svg class="a" style="left:0;top:0" width="1024" height="675"><g fill="none" stroke="#0303b8" stroke-linecap="round" stroke-linejoin="round"><polyline points="256.3,559.3 284.2,569.6 255.4,573" stroke-width="4.4"/><line x1="259.3" y1="586.7" x2="278.3" y2="589.6" stroke-width="4.3"/><line x1="269.5" y1="581.3" x2="268" y2="595.5" stroke-width="4.3"/><line x1="300.8" y1="562.3" x2="298.3" y2="599.4" stroke-width="9.8"/><line x1="509.4" y1="593.5" x2="507.2" y2="625.5" stroke-width="9.6"/><line x1="525.4" y1="602.5" x2="524.6" y2="621.3" stroke-width="9.4"/><line x1="542" y1="610.5" x2="541.2" y2="617.5" stroke-width="9.2"/></g><g fill="#0303b8"><polygon points="300,577.8 319,580 318,588.8 300,586.8"/><polygon points="318.8,570.6 349,573.8 348.3,601.5 316.9,597"/><polygon points="370.3,577.5 403.2,581.7 401.9,608.5 370.3,604.6"/><polygon points="402,591 420,592.8 419.5,602.5 402,601"/><polygon points="419.3,586.6 432.2,588.3 444,611.4 418.3,608.1"/><polygon points="471,592 495.6,597.4 494.5,618.3 468.7,614"/><polygon points="494,602 506,603.5 505.5,614.2 494,613"/></g><polygon points="335.5,565.5 389.6,572.1 386.5,601.9 333.3,594.9" fill="#c4c4bc"/><polygon points="336.5,566.5 344.3,566.8 343,587.4 335.5,587" fill="#8c8c8c"/><polygon points="381.2,571.2 388.6,572.6 387.6,593 379.9,592.3" fill="#8c8c8c"/><polygon points="344.8,566.3 381.2,571.2 379.9,592.3 343,587.4" fill="#000"/><polygon points="335.1,587.5 387.5,593.3 386.5,601.2 334,594.5" fill="#c6c6c6"/><polygon points="431.1,601.1 484.9,607 483.8,614.6 430,607.1" fill="#3d3d3b"/><polygon points="431.7,582.4 438.7,583.4 438.1,601.6 430.6,601.1" fill="#d9d870"/><polygon points="479.5,588.3 485.9,589.3 484.9,607.5 479,607" fill="#d9d870"/><polygon points="440.3,578.6 479.5,583.4 477.9,605.4 438.1,601.1" fill="#a2a6b6"/><polygon points="439,594.5 478.8,599.2 477.9,605.4 438.1,601.1" fill="#b9bdca"/></svg>
<div class="a" style="left:634px;top:96px;width:361px;height:1px;background:#56656b;"></div>
<div class="a" style="left:634px;top:96px;width:1px;height:525px;background:#56656b;"></div>
<div class="a" style="left:994px;top:96px;width:1px;height:525px;background:#56656b;"></div>
<div class="a" style="left:646px;top:95px;width:68px;height:3px;background:#37474f;"></div>
<div class="t" style="left:652.10px;top:87.83px;font-size:13.77px;color:#e6e6e6;font-family:'Liberation Sans', sans-serif;font-weight:400;transform:scaleX(1.0566);transform-origin:left 0;-webkit-text-stroke:0.2px #e6e6e6;">Options</div>
<div class="a" style="left:642px;top:122px;width:169px;height:1px;background:#56656b;"></div>
<div class="a" style="left:642px;top:122px;width:1px;height:158px;background:#56656b;"></div>
<div class="a" style="left:810px;top:122px;width:1px;height:158px;background:#56656b;"></div>
<div class="a" style="left:642px;top:279px;width:169px;height:1px;background:#56656b;"></div>
<div class="a" style="left:655px;top:121px;width:150px;height:3px;background:#37474f;"></div>
<div class="t" style="left:660.50px;top:113.53px;font-size:13.77px;color:#7d8689;font-family:'Liberation Sans', sans-serif;font-weight:400;transform:scaleX(1.0855);transform-origin:left 0;-webkit-text-stroke:0.2px #7d8689;">Base Copper Weight</div>
<div class="a" style="left:652.0px;top:132.7px;width:15px;height:15px;box-sizing:border-box;border:2px solid #838d90;border-radius:50%;background:#414f56;"></div>
<div class="t" style="left:672.20px;top:133.43px;font-size:13.77px;color:#7d8689;font-family:'Liberation Sans', sans-serif;font-weight:400;transform:scaleX(1.0887);transform-origin:left 0;-webkit-text-stroke:0.2px #7d8689;">9um</div>
<div class="a" style="left:652.0px;top:148.35999999999999px;width:15px;height:15px;box-sizing:border-box;border:2px solid #838d90;border-radius:50%;background:#414f56;"></div>
<div class="a" style="left:656.0px;top:152.35999999999999px;width:7px;height:7px;border-radius:50%;background:#a6acae;"></div>
<div class="t" style="left:672.20px;top:149.09px;font-size:13.77px;color:#7d8689;font-family:'Liberation Sans', sans-serif;font-weight:400;transform:scaleX(1.0867);transform-origin:left 0;-webkit-text-stroke:0.2px #7d8689;">18um</div>
<div class="a" style="left:652.0px;top:164.01999999999998px;width:15px;height:15px;box-sizing:border-box;border:2px solid #838d90;border-radius:50%;background:#414f56;"></div>
<div class="t" style="left:672.20px;top:164.75px;font-size:13.77px;color:#7d8689;font-family:'Liberation Sans', sans-serif;font-weight:400;transform:scaleX(1.0867);transform-origin:left 0;-webkit-text-stroke:0.2px #7d8689;">35um</div>
<div class="a" style="left:652.0px;top:179.68px;width:15px;height:15px;box-sizing:border-box;border:2px solid #838d90;border-radius:50%;background:#414f56;"></div>
<div class="t" style="left:672.20px;top:180.41px;font-size:13.77px;color:#7d8689;font-family:'Liberation Sans', sans-serif;font-weight:400;transform:scaleX(1.0867);transform-origin:left 0;-webkit-text-stroke:0.2px #7d8689;">53um</div>
<div class="a" style="left:652.0px;top:195.33999999999997px;width:15px;height:15px;box-sizing:border-box;border:2px solid #838d90;border-radius:50%;background:#414f56;"></div>
<div class="t" style="left:672.20px;top:196.07px;font-size:13.77px;color:#7d8689;font-family:'Liberation Sans', sans-serif;font-weight:400;transform:scaleX(1.0867);transform-origin:left 0;-webkit-text-stroke:0.2px #7d8689;">70um</div>
<div class="a" style="left:652.0px;top:211.0px;width:15px;height:15px;box-sizing:border-box;border:2px solid #838d90;border-radius:50%;background:#414f56;"></div>
<div class="t" style="left:672.20px;top:211.73px;font-size:13.77px;color:#7d8689;font-family:'Liberation Sans', sans-serif;font-weight:400;transform:scaleX(1.0867);transform-origin:left 0;-webkit-text-stroke:0.2px #7d8689;">88um</div>
<div class="a" style="left:652.0px;top:226.66px;width:15px;height:15px;box-sizing:border-box;border:2px solid #838d90;border-radius:50%;background:#414f56;"></div>
<div class="t" style="left:672.20px;top:227.39px;font-size:13.77px;color:#7d8689;font-family:'Liberation Sans', sans-serif;font-weight:400;transform:scaleX(1.0854);transform-origin:left 0;-webkit-text-stroke:0.2px #7d8689;">106um</div>
<div class="a" style="left:652.0px;top:242.32px;width:15px;height:15px;box-sizing:border-box;border:2px solid #838d90;border-radius:50%;background:#414f56;"></div>
<div class="t" style="left:672.20px;top:243.05px;font-size:13.77px;color:#7d8689;font-family:'Liberation Sans', sans-serif;font-weight:400;transform:scaleX(1.0854);transform-origin:left 0;-webkit-text-stroke:0.2px #7d8689;">142um</div>
<div class="a" style="left:652.0px;top:257.98px;width:15px;height:15px;box-sizing:border-box;border:2px solid #838d90;border-radius:50%;background:#414f56;"></div>
<div class="t" style="left:672.20px;top:258.71px;font-size:13.77px;color:#7d8689;font-family:'Liberation Sans', sans-serif;font-weight:400;transform:scaleX(1.0854);transform-origin:left 0;-webkit-text-stroke:0.2px #7d8689;">178um</div>
<div class="a" style="left:642px;top:297px;width:169px;height:1px;background:#56656b;"></div>
<div class="a" style="left:642px;top:297px;width:1px;height:133px;background:#56656b;"></div>
<div class="a" style="left:810px;top:297px;width:1px;height:133px;background:#56656b;"></div>
<div class="a" style="left:642px;top:429px;width:169px;height:1px;background:#56656b;"></div>
<div class="a" style="left:655px;top:296px;width:130px;height:3px;background:#37474f;"></div>
<div class="t" style="left:660.00px;top:288.53px;font-size:13.77px;color:#7d8689;font-family:'Liberation Sans', sans-serif;font-weight:400;transform:scaleX(1.1021);transform-origin:left 0;-webkit-text-stroke:0.2px #7d8689;">Plating Thickness</div>
<div class="a" style="left:652.0px;top:308.1px;width:15px;height:15px;box-sizing:border-box;border:2px solid #838d90;border-radius:50%;background:#414f56;"></div>
<div class="t" style="left:672.20px;top:308.83px;font-size:13.77px;color:#7d8689;font-family:'Liberation Sans', sans-serif;font-weight:400;transform:scaleX(0.9781);transform-origin:left 0;-webkit-text-stroke:0.2px #7d8689;">Bare PCB</div>
<div class="a" style="left:652.0px;top:324.87px;width:15px;height:15px;box-sizing:border-box;border:2px solid #838d90;border-radius:50%;background:#414f56;"></div>
<div class="t" style="left:672.20px;top:325.60px;font-size:13.77px;color:#7d8689;font-family:'Liberation Sans', sans-serif;font-weight:400;transform:scaleX(1.0867);transform-origin:left 0;-webkit-text-stroke:0.2px #7d8689;">18um</div>
<div class="a" style="left:652.0px;top:341.64000000000004px;width:15px;height:15px;box-sizing:border-box;border:2px solid #838d90;border-radius:50%;background:#414f56;"></div>
<div class="a" style="left:656.0px;top:345.64000000000004px;width:7px;height:7px;border-radius:50%;background:#a6acae;"></div>
<div class="t" style="left:672.20px;top:342.37px;font-size:13.77px;color:#7d8689;font-family:'Liberation Sans', sans-serif;font-weight:400;transform:scaleX(1.0867);transform-origin:left 0;-webkit-text-stroke:0.2px #7d8689;">35um</div>
<div class="a" style="left:652.0px;top:358.41px;width:15px;height:15px;box-sizing:border-box;border:2px solid #838d90;border-radius:50%;background:#414f56;"></div>
<div class="t" style="left:672.20px;top:359.14px;font-size:13.77px;color:#7d8689;font-family:'Liberation Sans', sans-serif;font-weight:400;transform:scaleX(1.0867);transform-origin:left 0;-webkit-text-stroke:0.2px #7d8689;">53um</div>
<div class="a" style="left:652.0px;top:375.18px;width:15px;height:15px;box-sizing:border-box;border:2px solid #838d90;border-radius:50%;background:#414f56;"></div>
<div class="t" style="left:672.20px;top:375.91px;font-size:13.77px;color:#7d8689;font-family:'Liberation Sans', sans-serif;font-weight:400;transform:scaleX(1.0867);transform-origin:left 0;-webkit-text-stroke:0.2px #7d8689;">70um</div>
<div class="a" style="left:652.0px;top:391.95000000000005px;width:15px;height:15px;box-sizing:border-box;border:2px solid #838d90;border-radius:50%;background:#414f56;"></div>
<div class="t" style="left:672.20px;top:392.68px;font-size:13.77px;color:#7d8689;font-family:'Liberation Sans', sans-serif;font-weight:400;transform:scaleX(1.0867);transform-origin:left 0;-webkit-text-stroke:0.2px #7d8689;">88um</div>
<div class="a" style="left:652.0px;top:408.72px;width:15px;height:15px;box-sizing:border-box;border:2px solid #838d90;border-radius:50%;background:#414f56;"></div>
<div class="t" style="left:672.20px;top:409.45px;font-size:13.77px;color:#7d8689;font-family:'Liberation Sans', sans-serif;font-weight:400;transform:scaleX(1.0854);transform-origin:left 0;-webkit-text-stroke:0.2px #7d8689;">106um</div>
<div class="a" style="left:642px;top:447px;width:169px;height:1px;background:#56656b;"></div>
<div class="a" style="left:642px;top:447px;width:1px;height:75px;background:#56656b;"></div>
<div class="a" style="left:810px;top:447px;width:1px;height:75px;background:#56656b;"></div>
<div class="a" style="left:642px;top:521px;width:169px;height:1px;background:#56656b;"></div>
<div class="a" style="left:655px;top:446px;width:122px;height:3px;background:#37474f;"></div>
<div class="t" style="left:660.00px;top:438.53px;font-size:13.77px;color:#7d8689;font-family:'Liberation Sans', sans-serif;font-weight:400;transform:scaleX(1.0861);transform-origin:left 0;-webkit-text-stroke:0.2px #7d8689;">Plane Thickness</div>
<div class="a" style="left:652.0px;top:463.5px;width:15px;height:15px;box-sizing:border-box;border:2px solid #838d90;border-radius:50%;background:#414f56;"></div>
<div class="a" style="left:656.0px;top:467.5px;width:7px;height:7px;border-radius:50%;background:#a6acae;"></div>
<div class="t" style="left:672.20px;top:464.23px;font-size:13.77px;color:#7d8689;font-family:'Liberation Sans', sans-serif;font-weight:400;transform:scaleX(1.0558);transform-origin:left 0;-webkit-text-stroke:0.2px #7d8689;">0.5oz / 1oz</div>
<div class="a" style="left:652.0px;top:494.5px;width:15px;height:15px;box-sizing:border-box;border:2px solid #838d90;border-radius:50%;background:#414f56;"></div>
<div class="t" style="left:672.20px;top:495.23px;font-size:13.77px;color:#7d8689;font-family:'Liberation Sans', sans-serif;font-weight:400;transform:scaleX(1.0378);transform-origin:left 0;-webkit-text-stroke:0.2px #7d8689;">2oz</div>
<div class="a" style="left:642px;top:539px;width:169px;height:1px;background:#56656b;"></div>
<div class="a" style="left:642px;top:539px;width:1px;height:75px;background:#56656b;"></div>
<div class="a" style="left:810px;top:539px;width:1px;height:75px;background:#56656b;"></div>
<div class="a" style="left:642px;top:613px;width:169px;height:1px;background:#56656b;"></div>
<div class="a" style="left:655px;top:538px;width:125px;height:3px;background:#37474f;"></div>
<div class="t" style="left:660.00px;top:530.53px;font-size:13.77px;color:#7d8689;font-family:'Liberation Sans', sans-serif;font-weight:400;transform:scaleX(1.1096);transform-origin:left 0;-webkit-text-stroke:0.2px #7d8689;">Conductor Layer</div>
<div class="a" style="left:652.0px;top:555.1px;width:15px;height:15px;box-sizing:border-box;border:2px solid #838d90;border-radius:50%;background:#414f56;"></div>
<div class="t" style="left:672.20px;top:555.83px;font-size:13.77px;color:#7d8689;font-family:'Liberation Sans', sans-serif;font-weight:400;transform:scaleX(1.0742);transform-origin:left 0;-webkit-text-stroke:0.2px #7d8689;">Internal Layer</div>
<div class="a" style="left:652.0px;top:586.9px;width:15px;height:15px;box-sizing:border-box;border:2px solid #838d90;border-radius:50%;background:#414f56;"></div>
<div class="t" style="left:672.20px;top:587.63px;font-size:13.77px;color:#7d8689;font-family:'Liberation Sans', sans-serif;font-weight:400;transform:scaleX(1.0619);transform-origin:left 0;-webkit-text-stroke:0.2px #7d8689;">External Layer</div>
<div class="a" style="left:818px;top:120px;width:169px;height:1px;background:#56656b;"></div>
<div class="a" style="left:818px;top:120px;width:1px;height:60px;background:#56656b;"></div>
<div class="a" style="left:986px;top:120px;width:1px;height:60px;background:#56656b;"></div>
<div class="a" style="left:818px;top:179px;width:169px;height:1px;background:#56656b;"></div>
<div class="a" style="left:830px;top:119px;width:42px;height:3px;background:#37474f;"></div>
<div class="t" style="left:835.40px;top:111.53px;font-size:13.77px;color:#7d8689;font-family:'Liberation Sans', sans-serif;font-weight:400;transform:scaleX(1.0591);transform-origin:left 0;-webkit-text-stroke:0.2px #7d8689;">Units</div>
<div class="a" style="left:826.9px;top:131.5px;width:15px;height:15px;box-sizing:border-box;border:2px solid #838d90;border-radius:50%;background:#414f56;"></div>
<div class="t" style="left:847.50px;top:132.23px;font-size:13.77px;color:#7d8689;font-family:'Liberation Sans', sans-serif;font-weight:400;transform:scaleX(1.0875);transform-origin:left 0;-webkit-text-stroke:0.2px #7d8689;">Imperial</div>
<div class="a" style="left:826.9px;top:156.0px;width:15px;height:15px;box-sizing:border-box;border:2px solid #838d90;border-radius:50%;background:#414f56;"></div>
<div class="a" style="left:830.9px;top:160.0px;width:7px;height:7px;border-radius:50%;background:#a6acae;"></div>
<div class="t" style="left:847.50px;top:156.73px;font-size:13.77px;color:#7d8689;font-family:'Liberation Sans', sans-serif;font-weight:400;transform:scaleX(1.0778);transform-origin:left 0;-webkit-text-stroke:0.2px #7d8689;">Metric</div>
<div class="a" style="left:818px;top:196px;width:169px;height:1px;background:#56656b;"></div>
<div class="a" style="left:818px;top:196px;width:1px;height:117px;background:#56656b;"></div>
<div class="a" style="left:986px;top:196px;width:1px;height:117px;background:#56656b;"></div>
<div class="a" style="left:818px;top:312px;width:169px;height:1px;background:#56656b;"></div>
<div class="a" style="left:830px;top:195px;width:137px;height:3px;background:#37474f;"></div>
<div class="t" style="left:835.60px;top:188.03px;font-size:13.77px;color:#e4e6e6;font-family:'Liberation Sans', sans-serif;font-weight:400;transform:scaleX(1.1409);transform-origin:left 0;-webkit-text-stroke:0.2px #e4e6e6;">Substrate Options</div>
<div class="t" style="left:826.30px;top:207.86px;font-size:14.52px;color:#7d8689;font-family:'Liberation Sans', sans-serif;font-weight:400;transform:scaleX(1.0695);transform-origin:left 0;-webkit-text-stroke:0.2px #7d8689;">Material Selection</div>
<div class="a" style="left:826.5px;top:229px;width:151.0px;height:23.5px;background:#242e34;"></div>
<div class="a" style="left:828.5px;top:231px;width:147.0px;height:19.5px;background:#4a575e;"></div>
<div class="t" style="left:832.40px;top:232.73px;font-size:13.77px;color:#f2f2f2;font-family:'Liberation Sans', sans-serif;font-weight:700;transform:scaleX(1.0789);transform-origin:left 0;">FR-4 STD</div>
<svg class="a" style="left:960px;top:236px" width="15" height="9"><polyline points="1.5,1.5 7.3,7 13.2,1.5" fill="none" stroke="#9aa3a6" stroke-width="1.4"/></svg>
<div class="t" style="left:826.60px;top:259.73px;font-size:13.77px;color:#7d8689;font-family:'Liberation Sans', sans-serif;font-weight:400;transform:scaleX(0.9843);transform-origin:left 0;-webkit-text-stroke:0.2px #7d8689;">Er</div>
<div class="t" style="left:902.20px;top:258.36px;font-size:14.52px;color:#7d8689;font-family:'Liberation Sans', sans-serif;font-weight:400;transform:scaleX(1.0803);transform-origin:left 0;-webkit-text-stroke:0.2px #7d8689;">Tg (°C)</div>
<div class="a" style="left:826.6px;top:279px;width:67.39999999999998px;height:24px;background:#242e34;"></div>
<div class="a" style="left:828.6px;top:281px;width:63.39999999999998px;height:20px;background:#4a575e;"></div>
<div class="t" style="left:830.10px;top:282.95px;font-size:14.09px;color:#7a756e;font-family:'Liberation Sans', sans-serif;font-weight:700;transform:scaleX(1.2026);transform-origin:left 0;">4.6</div>
<div class="a" style="left:902.2px;top:279px;width:67.0px;height:24px;background:#242e34;"></div>
<div class="a" style="left:904.2px;top:281px;width:63.0px;height:20px;background:#4a575e;"></div>
<div class="t" style="left:905.70px;top:282.95px;font-size:14.09px;color:#7a756e;font-family:'Liberation Sans', sans-serif;font-weight:700;transform:scaleX(1.1807);transform-origin:left 0;">130</div>
<div class="a" style="left:818px;top:330px;width:169px;height:1px;background:#56656b;"></div>
<div class="a" style="left:818px;top:330px;width:1px;height:92px;background:#56656b;"></div>
<div class="a" style="left:986px;top:330px;width:1px;height:92px;background:#56656b;"></div>
<div class="a" style="left:818px;top:421px;width:169px;height:1px;background:#56656b;"></div>
<div class="a" style="left:830px;top:329px;width:114px;height:3px;background:#37474f;"></div>
<div class="t" style="left:836.70px;top:322.03px;font-size:13.77px;color:#e4e6e6;font-family:'Liberation Sans', sans-serif;font-weight:400;transform:scaleX(1.0906);transform-origin:left 0;-webkit-text-stroke:0.2px #e4e6e6;">Temp Rise (°C)</div>
<div class="a" style="left:868.6px;top:346px;width:75.19999999999993px;height:24px;background:#242e34;"></div>
<div class="a" style="left:870.6px;top:348px;width:71.19999999999993px;height:20px;background:#4a575e;"></div>
<div class="t" style="left:872.10px;top:349.95px;font-size:14.09px;color:#7a756e;font-family:'Liberation Sans', sans-serif;font-weight:700;transform:scaleX(1.1807);transform-origin:left 0;">20</div>
<svg class="a" style="left:945px;top:347px" width="14" height="22"><polyline points="2.5,7.5 7,3 11.5,7.5" fill="none" stroke="#d6d8d8" stroke-width="1.5"/><polyline points="2.5,15 7,19.5 11.5,15" fill="none" stroke="#d6d8d8" stroke-width="1.5"/></svg>
<div class="a" style="left:868px;top:379px;width:76.29999999999995px;height:9px;background:#e3e3e3;"></div>
<div class="a" style="left:868px;top:379.5px;width:7.600000000000023px;height:8.0px;background:#12b02f;"></div>
<div class="t" style="left:827.00px;top:395.86px;font-size:14.52px;color:#7d8689;font-family:'Liberation Sans', sans-serif;font-weight:400;transform:scaleX(1.1129);transform-origin:left 0;-webkit-text-stroke:0.2px #7d8689;">Temp in (°F) = 36.0</div>
<div class="a" style="left:818px;top:439px;width:169px;height:1px;background:#56656b;"></div>
<div class="a" style="left:818px;top:439px;width:1px;height:92px;background:#56656b;"></div>
<div class="a" style="left:986px;top:439px;width:1px;height:92px;background:#56656b;"></div>
<div class="a" style="left:818px;top:530px;width:169px;height:1px;background:#56656b;"></div>
<div class="a" style="left:830px;top:438px;width:143px;height:3px;background:#37474f;"></div>
<div class="t" style="left:836.00px;top:431.03px;font-size:13.77px;color:#e4e6e6;font-family:'Liberation Sans', sans-serif;font-weight:400;transform:scaleX(1.1268);transform-origin:left 0;-webkit-text-stroke:0.2px #e4e6e6;">Ambient Temp (°C)</div>
<div class="a" style="left:868.6px;top:455px;width:75.19999999999993px;height:24px;background:#242e34;"></div>
<div class="a" style="left:870.6px;top:457px;width:71.19999999999993px;height:20px;background:#4a575e;"></div>
<div class="t" style="left:872.10px;top:458.95px;font-size:14.09px;color:#7a756e;font-family:'Liberation Sans', sans-serif;font-weight:700;transform:scaleX(1.1807);transform-origin:left 0;">23</div>
<svg class="a" style="left:945px;top:456px" width="14" height="22"><polyline points="2.5,7.5 7,3 11.5,7.5" fill="none" stroke="#d6d8d8" stroke-width="1.5"/><polyline points="2.5,15 7,19.5 11.5,15" fill="none" stroke="#d6d8d8" stroke-width="1.5"/></svg>
<div class="a" style="left:868px;top:487.5px;width:76.29999999999995px;height:9.199999999999989px;background:#e3e3e3;"></div>
<div class="a" style="left:869px;top:488.5px;width:27px;height:7.199999999999989px;background:radial-gradient(ellipse at 60% 90%, #9be69b 0%, #5cd65f 45%, #39c548 100%);"></div>
<div class="t" style="left:827.00px;top:504.86px;font-size:14.52px;color:#7d8689;font-family:'Liberation Sans', sans-serif;font-weight:400;transform:scaleX(1.1129);transform-origin:left 0;-webkit-text-stroke:0.2px #7d8689;">Temp in (°F) = 73.4</div>
<div class="a" style="left:818px;top:538px;width:168px;height:1px;background:#2c383e;"></div>
<div class="a" style="left:818px;top:538px;width:1px;height:76px;background:#2c383e;"></div>
<div class="a" style="left:819px;top:539px;width:166px;height:1px;background:#56646a;"></div>
<div class="a" style="left:819px;top:539px;width:1px;height:74px;background:#56646a;"></div>
<div class="a" style="left:984px;top:539px;width:1px;height:74px;background:#2c383e;"></div>
<div class="a" style="left:819px;top:612px;width:166px;height:1px;background:#2c383e;"></div>
<div class="a" style="left:985px;top:538px;width:1px;height:76px;background:#56646a;"></div>
<div class="a" style="left:818px;top:613px;width:168px;height:1px;background:#56646a;"></div>
<div class="a" style="left:836px;top:578.6px;width:67.39999999999998px;height:25.899999999999977px;background:#28333a;"></div>
<div class="t" style="left:853.84px;top:583.53px;font-size:13.77px;color:#dfe0e0;font-family:'Liberation Sans', sans-serif;font-weight:400;transform:scaleX(1.0558);transform-origin:center 0;-webkit-text-stroke:0.2px #dfe0e0;">Print</div>
<div class="a" style="left:910.4px;top:578.6px;width:69.60000000000002px;height:25.899999999999977px;background:#28333a;"></div>
<div class="t" style="left:924.66px;top:583.53px;font-size:13.77px;color:#dfe0e0;font-family:'Liberation Sans', sans-serif;font-weight:400;transform:scaleX(1.0636);transform-origin:center 0;-webkit-text-stroke:0.2px #dfe0e0;">Solve!</div>
<div class="a" style="left:634px;top:630px;width:361px;height:1px;background:#56656b;"></div>
<div class="a" style="left:634px;top:630px;width:1px;height:71px;background:#56656b;"></div>
<div class="a" style="left:994px;top:630px;width:1px;height:71px;background:#56656b;"></div>
<div class="a" style="left:634px;top:700px;width:361px;height:1px;background:#56656b;"></div>
<div class="a" style="left:646px;top:629px;width:86px;height:3px;background:#37474f;"></div>
<div class="t" style="left:651.00px;top:622.03px;font-size:13.77px;color:#e4e6e6;font-family:'Liberation Sans', sans-serif;font-weight:400;transform:scaleX(1.0921);transform-origin:left 0;-webkit-text-stroke:0.2px #e4e6e6;">Information</div>
<div class="t" style="left:642.00px;top:639.53px;font-size:13.77px;color:#dfe0e0;font-family:'Liberation Sans', sans-serif;font-weight:400;transform:scaleX(1.0488);transform-origin:left 0;-webkit-text-stroke:0.2px #dfe0e0;">Total Resistance</div>
<div class="t" style="left:642.00px;top:655.33px;font-size:13.77px;color:#dfe0e0;font-family:'Liberation Sans', sans-serif;font-weight:400;transform:scaleX(1.0015);transform-origin:left 0;-webkit-text-stroke:0.2px #dfe0e0;">N/A</div>
<div class="t" style="left:818.30px;top:639.53px;font-size:13.77px;color:#dfe0e0;font-family:'Liberation Sans', sans-serif;font-weight:400;transform:scaleX(1.0433);transform-origin:left 0;-webkit-text-stroke:0.2px #dfe0e0;">Via Thermal Resistance</div>
<div class="t" style="left:818.30px;top:655.33px;font-size:13.77px;color:#dfe0e0;font-family:'Liberation Sans', sans-serif;font-weight:400;transform:scaleX(1.0015);transform-origin:left 0;-webkit-text-stroke:0.2px #dfe0e0;">N/A</div></body></html>
